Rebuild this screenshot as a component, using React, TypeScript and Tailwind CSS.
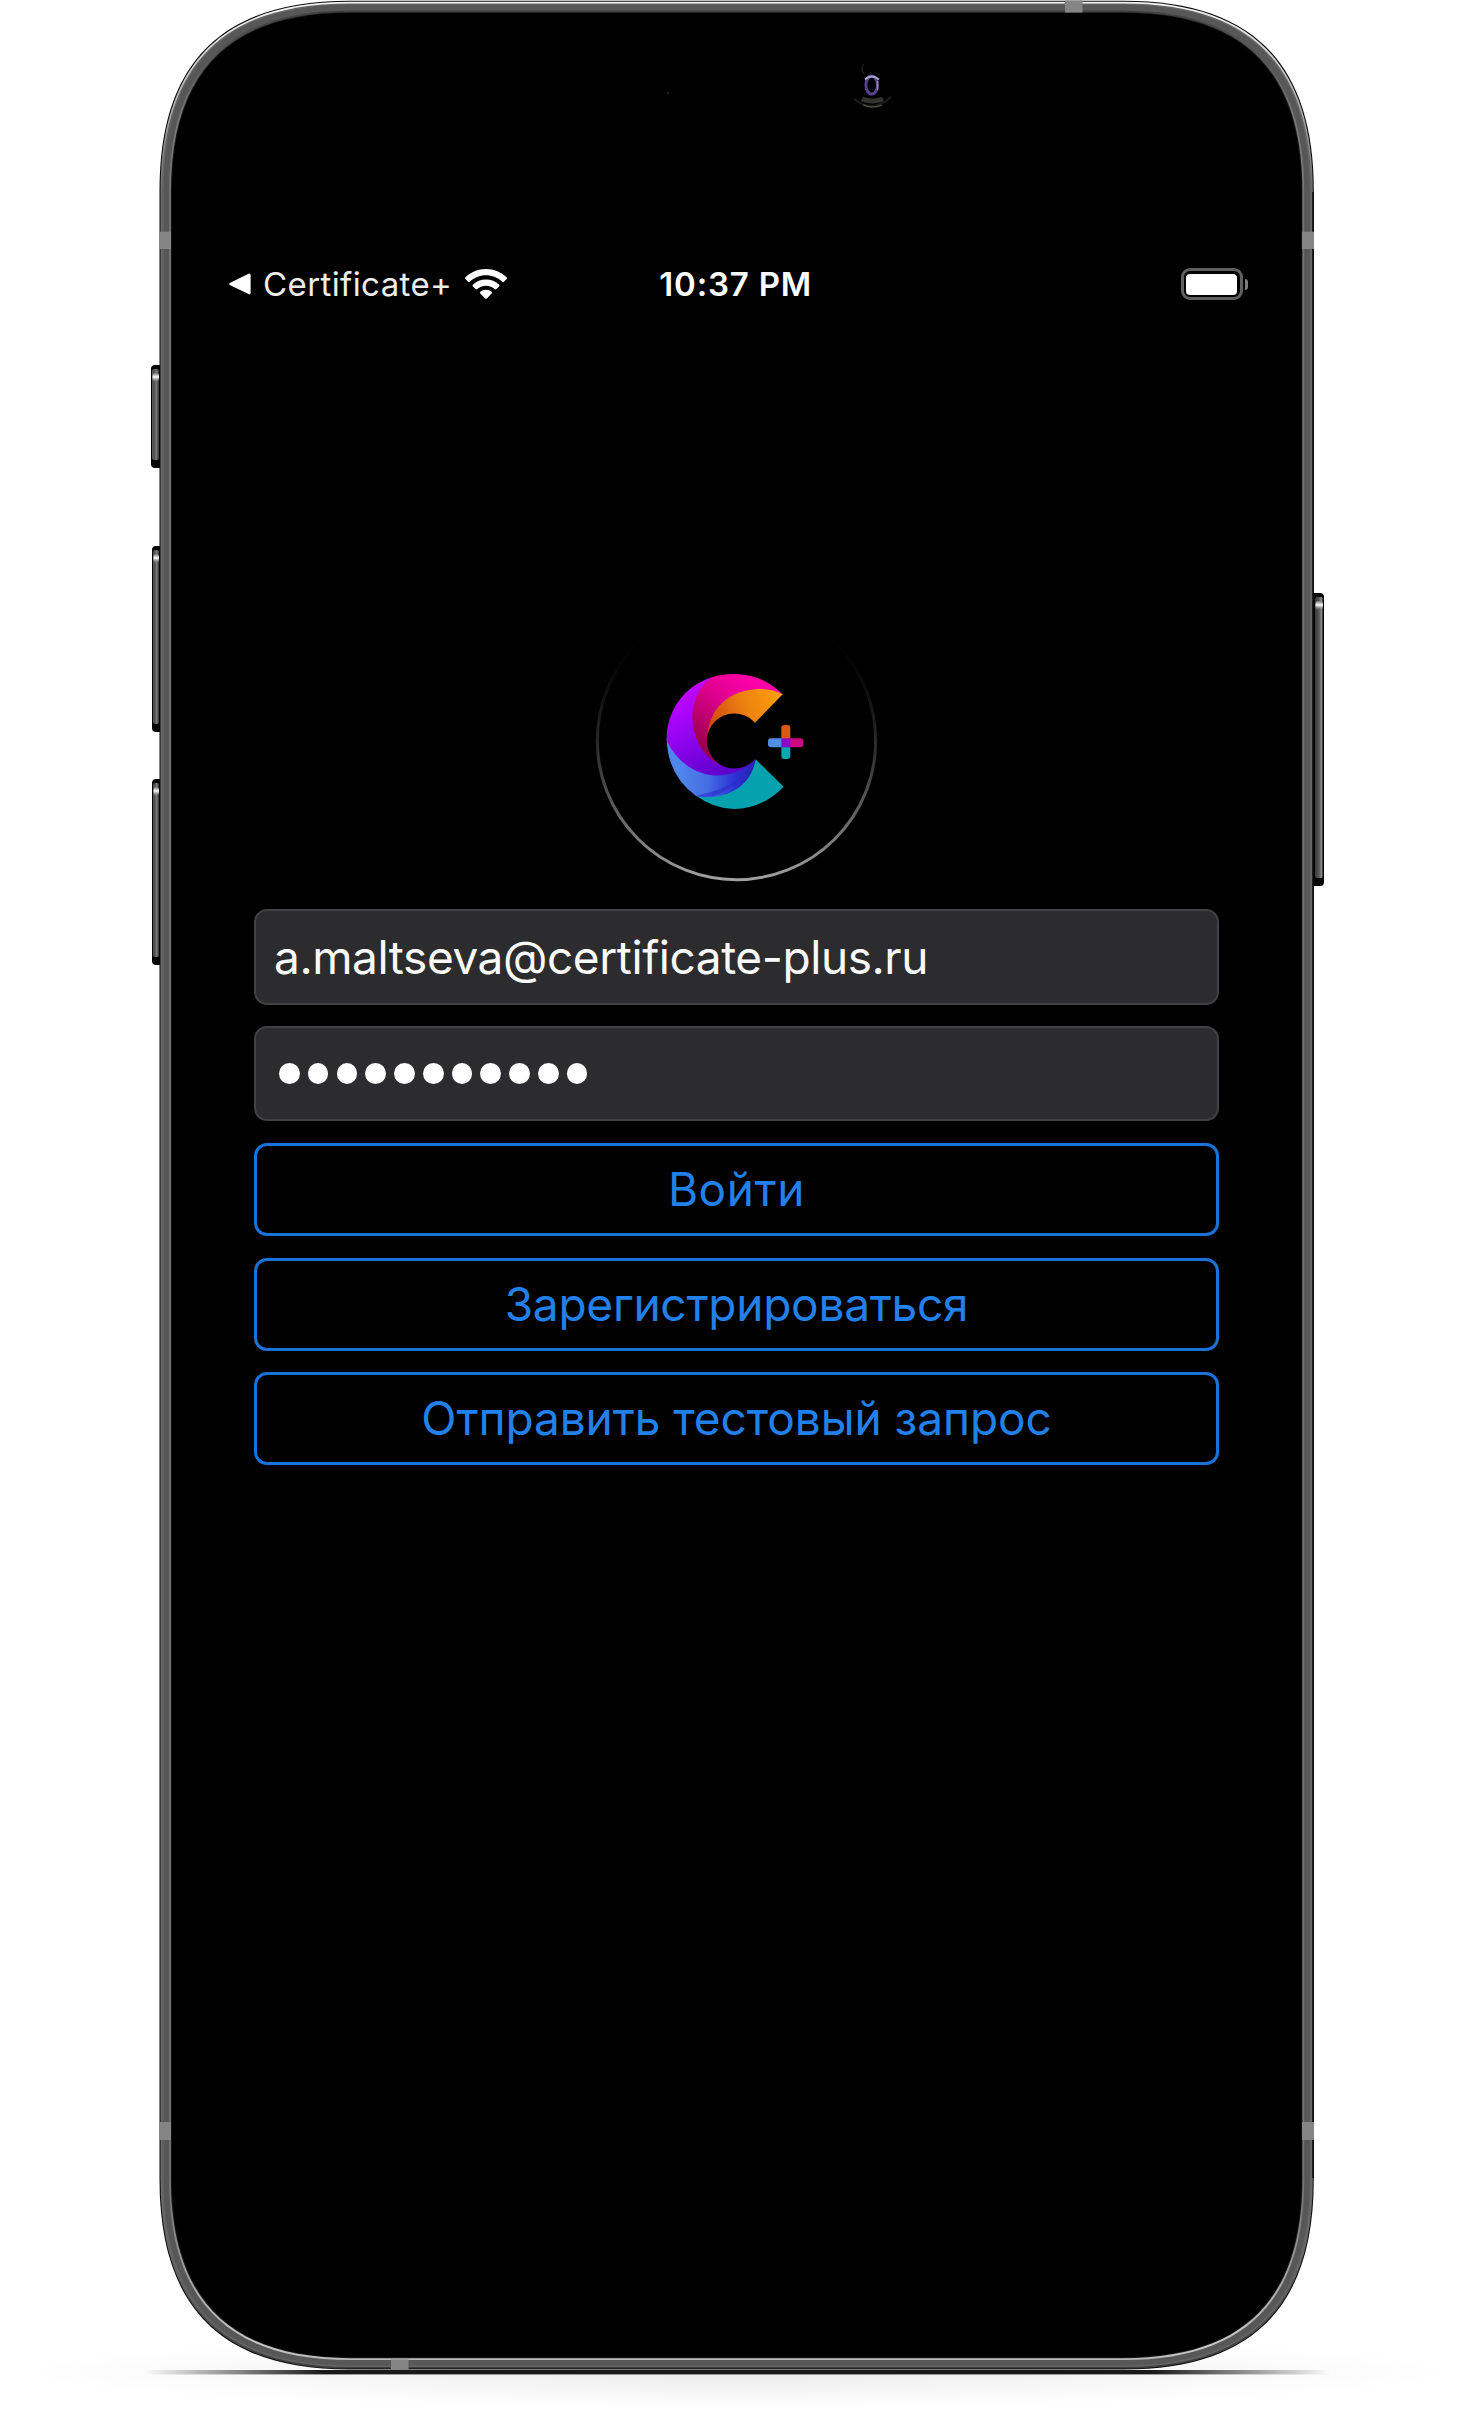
import type { ReactNode } from 'react';

/* Rounded device outline, inset by `i` pixels from the outer edge of the body. */
function outline(i: number) {
  const l = 159.5 + i;
  const r = 1313.8 - i;
  const t = 0.8 + i;
  const b = 2369.6 - i;
  const R = 190 - i * 0.9;
  const k = 62 - i * 0.3;
  return `M${l + R} ${t}H${r - R}C${r - k} ${t} ${r} ${t + k} ${r} ${t + R}V${b - R}C${r} ${b - k} ${r - k} ${b} ${r - R} ${b}H${l + R}C${l + k} ${b} ${l} ${b - k} ${l} ${b - R}V${t + R}C${l} ${t + k} ${l + k} ${t} ${l + R} ${t}Z`;
}

function SideButton({ x, y, w, h, flip = false }: { x: number; y: number; w: number; h: number; flip?: boolean }) {
  return (
    <g>
      <rect x={flip ? x - 6 : x} y={y} width={w + 6} height={h} rx="4" fill="#050505" />
      <rect x={x + 1} y={y + 4} width={w - 2} height={h - 12} rx="2" fill={flip ? 'url(#buttonRight)' : 'url(#button)'} />
      <rect x={x + 1.5} y={y + 8} width={w - 2.5} height="9" rx="3" fill="url(#glint)" />
    </g>
  );
}

function Device() {
  return (
    <svg className="absolute inset-0" width="1480" height="2410" viewBox="0 0 1480 2410" aria-hidden="true">
      <defs>
        <linearGradient id="button" x1="0" x2="1" y1="0" y2="0">
          <stop offset="0" stopColor="#5a5a5a" />
          <stop offset="0.3" stopColor="#4c4c4c" />
          <stop offset="0.6" stopColor="#7c7c7c" />
          <stop offset="1" stopColor="#333" />
        </linearGradient>
        <linearGradient id="buttonRight" x1="0" x2="1" y1="0" y2="0">
          <stop offset="0" stopColor="#3a3a3a" />
          <stop offset="0.5" stopColor="#555" />
          <stop offset="0.8" stopColor="#8b8b8b" />
          <stop offset="1" stopColor="#222" />
        </linearGradient>
        <linearGradient id="glint" x1="0" x2="0" y1="0" y2="1">
          <stop offset="0" stopColor="#777" />
          <stop offset="0.45" stopColor="#fff" />
          <stop offset="1" stopColor="#777" stopOpacity="0.2" />
        </linearGradient>
        <linearGradient id="outerRim" gradientUnits="userSpaceOnUse" x1="0" x2="0" y1="0" y2="2370">
          <stop offset="0" stopColor="#f4f4f4" />
          <stop offset="0.03" stopColor="#c9c9c9" />
          <stop offset="0.08" stopColor="#686868" />
          <stop offset="0.95" stopColor="#686868" />
          <stop offset="1" stopColor="#3c3c3c" />
        </linearGradient>
        <linearGradient id="innerRim" gradientUnits="userSpaceOnUse" x1="0" x2="0" y1="0" y2="2370">
          <stop offset="0" stopColor="#3a3a3a" />
          <stop offset="0.05" stopColor="#777" />
          <stop offset="0.93" stopColor="#777" />
          <stop offset="0.99" stopColor="#c8c8c8" />
          <stop offset="1" stopColor="#b0b0b0" />
        </linearGradient>
        <linearGradient id="contact" x1="0" x2="1" y1="0" y2="0">
          <stop offset="0" stopColor="#000" stopOpacity="0" />
          <stop offset="0.06" stopColor="#000" stopOpacity="0.35" />
          <stop offset="0.15" stopColor="#000" stopOpacity="0.9" />
          <stop offset="0.85" stopColor="#000" stopOpacity="0.9" />
          <stop offset="0.94" stopColor="#000" stopOpacity="0.35" />
          <stop offset="1" stopColor="#000" stopOpacity="0" />
        </linearGradient>
        <radialGradient id="ambient">
          <stop offset="0" stopColor="#000" stopOpacity="0.08" />
          <stop offset="0.6" stopColor="#000" stopOpacity="0.03" />
          <stop offset="1" stopColor="#000" stopOpacity="0" />
        </radialGradient>
      </defs>

      <ellipse cx="737" cy="2372" rx="720" ry="36" fill="url(#ambient)" />
      <rect x="145" y="2370" width="1185" height="4.4" fill="url(#contact)" />

      <SideButton x={151} y={365} w={9} h={103} />
      <SideButton x={152} y={546} w={8} h={186} />
      <SideButton x={152} y={779} w={8} h={186} />
      <SideButton x={1314} y={593} w={10} h={293} flip />

      <path d={outline(0)} fill="#0a0a0a" />
      <path d={outline(1)} fill="url(#outerRim)" />
      <path d={outline(2.6)} fill="#646464" />
      <path d={outline(4.2)} fill="#575757" />
      <path d={outline(9.6)} fill="url(#innerRim)" />
      <path d={outline(11.4)} fill="#1a1a1a" />
      <path d={outline(12.3)} fill="#000" />
      <rect x="1312.3" y="192" width="1.5" height="1986" fill="#080808" />

      <g fill="#858585">
        <rect x="159.5" y="231.7" width="11.5" height="17.3" />
        <rect x="1302" y="231.7" width="12" height="17.3" />
        <rect x="159.5" y="2122" width="11.5" height="18" />
        <rect x="1302" y="2122" width="12" height="18" />
        <rect x="1065" y="0.5" width="17.5" height="12" />
        <rect x="391" y="2359.5" width="17.5" height="10.5" />
      </g>

      <g fill="none">
        <path d="M864 64c-2 2-3 5-1 8l1 2" stroke="#2c2c30" strokeWidth="1" />
        <ellipse cx="871.7" cy="85" rx="5.8" ry="9" stroke="#54438c" strokeWidth="3" />
        <path d="M865 79.5Q871.7 73.5 879 79.5" stroke="#a9a2cf" strokeWidth="2" />
        <path d="M877.5 81v9" stroke="#9b84bd" strokeWidth="1.5" />
        <path d="M862 99Q872 103 883 99" stroke="#33342f" strokeWidth="5" />
        <path d="M854 99Q872 114 891 97" stroke="#1c1d1b" strokeWidth="2" />
        <path d="M863 105Q872 109 882 105" stroke="#4a4b45" strokeWidth="1.5" />
        <path d="M667 93h2" stroke="#303030" strokeWidth="1.5" />
      </g>
    </svg>
  );
}

function WifiIcon() {
  return (
    <svg className="ml-[12.5px] h-[31px] w-[42px]" viewBox="0 0 42 31" fill="#fff">
      <path d="M21 0C12.9 0 5.6 3.2.4 8.3c-.5.5-.5 1.2 0 1.7l2.7 2.8c.5.5 1.200.5 1.700 0C9 8.700 14.700 6.300 21 6.300s12 2.400 16.200 6.500c.5.5 1.200.5 1.700 0l2.700-2.800c.5-.5.5-1.200 0-1.700C36.400 3.200 29.100 0 21 0Z" />
      <path d="M21 10.600c-5.100 0-9.700 1.900-13.100 5.100-.5.5-.5 1.200 0 1.700l2.700 2.700c.5.5 1.200.5 1.700 0 2.300-2.100 5.300-3.400 8.700-3.400s6.400 1.300 8.700 3.400c.5.5 1.200.5 1.700 0l2.700-2.700c.5-.5.5-1.200 0-1.700-3.400-3.200-8-5.100-13.100-5.100Z" />
      <path d="M21 20.800c-2.200 0-4.200.8-5.700 2-.5.5-.5 1.200 0 1.700l4.900 5c.5.5 1.100.5 1.600 0l4.900-5c.5-.5.5-1.200 0-1.700-1.500-1.200-3.500-2-5.700-2Z" />
    </svg>
  );
}

function StatusBar() {
  return (
    <header className="flex h-10 items-center pr-[66px] pl-[69px] text-[33px] leading-10 text-white">
      <svg className="h-[22px] w-[22px]" viewBox="0 0 22 22" fill="#fff">
        <path d="M.8 10 20 .5Q21.6 0 21.6 2V20q0 2-1.6 1.3L.8 12Q-.5 11 .8 10Z" />
      </svg>
      <span className="ml-[12px] tracking-[0.4px] whitespace-nowrap text-[#ededed]">Certificate+</span>
      <WifiIcon />
      <span className="ml-[152.5px] font-semibold tracking-[0.8px] whitespace-nowrap">10:37 PM</span>
      <div className="ml-auto flex items-center">
        <div className="h-[32px] w-[62px] rounded-[9px] border-3 border-[#606060] p-[2.5px]">
          <div className="h-full w-full rounded-[4px] bg-white" />
        </div>
        <div className="ml-[2px] h-[11px] w-[3.5px] rounded-r-full bg-[#7a7a7a]" />
      </div>
    </header>
  );
}

function Logo() {
  return (
    <svg className="ml-[420px] h-[260px] w-[310px]" viewBox="0 0 930 780">
      <defs>
        <linearGradient id="ring" gradientUnits="userSpaceOnUse" x1="0" x2="0" y1="0" y2="720">
          <stop offset="0" stopColor="#999" stopOpacity="0" />
          <stop offset="0.12" stopColor="#999" stopOpacity="0.04" />
          <stop offset="0.25" stopColor="#999" stopOpacity="0.12" />
          <stop offset="0.5" stopColor="#999" stopOpacity="0.34" />
          <stop offset="0.75" stopColor="#999" stopOpacity="0.68" />
          <stop offset="1" stopColor="#a0a0a0" />
        </linearGradient>
        <linearGradient id="pink" gradientUnits="userSpaceOnUse" x1="520" y1="120" x2="350" y2="320">
          <stop offset="0" stopColor="#ff00a8" />
          <stop offset="0.4" stopColor="#e00090" />
          <stop offset="1" stopColor="#96004a" />
        </linearGradient>
        <linearGradient id="orange" gradientUnits="userSpaceOnUse" x1="600" y1="165" x2="390" y2="240">
          <stop offset="0" stopColor="#ff9f0c" />
          <stop offset="0.5" stopColor="#ec8010" />
          <stop offset="1" stopColor="#d24a10" />
        </linearGradient>
        <linearGradient id="violet" gradientUnits="userSpaceOnUse" x1="310" y1="160" x2="410" y2="400">
          <stop offset="0" stopColor="#bd05ff" />
          <stop offset="0.5" stopColor="#9004ee" />
          <stop offset="1" stopColor="#6000cc" />
        </linearGradient>
        <linearGradient id="blue" gradientUnits="userSpaceOnUse" x1="300" y1="400" x2="510" y2="400">
          <stop offset="0" stopColor="#4f86ec" />
          <stop offset="0.4" stopColor="#456ce4" />
          <stop offset="0.8" stopColor="#2b2fd0" />
          <stop offset="1" stopColor="#2824b8" />
        </linearGradient>
      </defs>
      <ellipse cx="469.5" cy="302" rx="417.5" ry="417" fill="none" stroke="url(#ring)" strokeWidth="9" />

      <path d="M527 358Q518 395 470 432Q425 467 350 468Q398 505 462 507Q545 507 611 440Z" fill="#03a2ae" />
      <path d="M260 295Q262 405 348 468Q368 474 400 471C460 464 515 430 527 358L465 340L350 340Z" fill="url(#blue)" />
      <path d="M348 468C400 455 455 440 486 408Q450 453 400 468Q370 474 348 468Z" fill="#2a2ccc" opacity="0.6" />
      <path d="M260 302C258 215 310 140 392 113L450 300L520 365Q470 410 395 406Q305 392 260 302Z" fill="url(#violet)" />
      <path d="M392 113Q425 101 465 102Q545 102 608 163L500 240L460 300L440 380Q412 372 400 362Q345 325 337 240Q334 160 392 113Z" fill="url(#pink)" />
      <path d="M608 163Q575 145 530 147Q458 152 415 200Q388 232 383 280L460 300L525 248Z" fill="url(#orange)" />
      <circle cx="463" cy="303" r="82.5" fill="#000" />

      <rect x="604" y="255" width="27" height="50" rx="9" fill="#dc5718" />
      <rect x="604" y="305" width="27" height="52" rx="9" fill="#08a5ad" />
      <rect x="564" y="295" width="50" height="27" rx="9" fill="#518de0" />
      <rect x="620" y="295" width="50" height="27" rx="9" fill="#cf0780" />
      <rect x="604" y="295" width="27" height="27" fill="#8b08c8" />
    </svg>
  );
}

function Field({ children }: { children: ReactNode }) {
  return (
    <div className="flex h-[95.5px] items-center rounded-[13px] border-2 border-[#424244] bg-[#2c2c2e] pl-[18px] text-[46px] leading-[56px] tracking-[-0.43px] whitespace-nowrap text-[#fafafa]">
      {children}
    </div>
  );
}

function OutlineButton({ children, className }: { children: ReactNode; className: string }) {
  return (
    <button
      className={`flex h-[93px] w-full items-center justify-center rounded-[13px] border-3 border-[#1972d9] pb-px text-[46px] leading-[56px] whitespace-nowrap text-[#2280ea] ${className}`}
    >
      {children}
    </button>
  );
}

export default function App() {
  return (
    <div className="relative h-[2410px] w-[1480px] overflow-hidden bg-white font-[Inter,sans-serif]">
      <Device />
      <main className="relative ml-[160px] w-[1154px] pt-[264px]">
        <StatusBar />
        <div className="mt-[336px]">
          <Logo />
        </div>
        <div className="mt-[9px] ml-[94px] w-[965px]">
          <Field>a.maltseva@certificate-plus.ru</Field>
          <div className="mt-[21px]">
            <Field>
              <div className="flex gap-[8.2px] pl-[5px]" role="img" aria-label="Password">
                {Array.from({ length: 11 }, (_, i) => (
                  <span key={i} className="h-[20.6px] w-[20.6px] rounded-full bg-white" />
                ))}
              </div>
            </Field>
          </div>
          <div className="mt-[22.4px] flex flex-col gap-[21.5px]">
            <OutlineButton className="tracking-[0.6px]">Войти</OutlineButton>
            <OutlineButton className="tracking-[-0.25px]">Зарегистрироваться</OutlineButton>
            <OutlineButton className="tracking-[-0.08px]">Отправить тестовый запрос</OutlineButton>
          </div>
        </div>
      </main>
    </div>
  );
}
